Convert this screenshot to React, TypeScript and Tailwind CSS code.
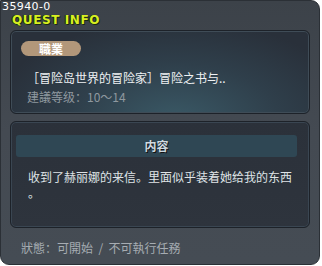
import React from "react";

const cjk = "font-['Noto_Sans_CJK_SC','Noto_Sans',sans-serif]";

const QuestInfo = () => {
  return (
    <div className={`w-[322px] h-[266px] bg-white ${cjk}`}>
      <div className="w-[320px] h-[265px] rounded-tr-[9px] rounded-b-[9px] border border-[#2b3036] bg-gradient-to-b from-[#3c4249] via-[#444a52] to-[#454c54] flex flex-col">
        {/* header */}
        <div className="h-[29px] flex flex-col">
          <div className="pl-[1px] text-[11px] leading-[11px] tracking-[0.4px] text-white font-['DejaVu_Sans',sans-serif]">
            35940-0
          </div>
          <div className="pl-[11px] mt-[2px] text-[12px] leading-[12px] tracking-[0.6px] font-bold text-[#d8f020] font-['DejaVu_Sans',sans-serif] [text-shadow:1px_1px_0_#1b2a10,-1px_0_0_#1b2a10]">
            QUEST INFO
          </div>
        </div>

        <div className="px-[9px] flex flex-col gap-[7px]">
          {/* quest card */}
          <div className="h-[84px] rounded-[6px] border border-[#1d2229] shadow-[inset_0_0_0_1px_#3f4c57] bg-[radial-gradient(ellipse_at_55%_110%,#3a5966_0%,#2f3f4b_45%,#29303a_80%)] px-[10px] pt-[10px]">
            <div className="w-[60px] h-[15px] rounded-full bg-[#b2977a] flex items-center justify-center text-[12px] leading-none font-bold text-white">
              職業
            </div>
            <div className="mt-[14px] pl-[6px] text-[12px] leading-[16px] text-[#eef1f3]">
              ［冒险岛世界的冒险家］冒险之书与..
            </div>
            <div className="mt-[3px] pl-[6px] text-[12px] leading-[16px] text-[#8f989f]">
              建議等级：10～14
            </div>
          </div>

          {/* content card */}
          <div className="h-[107px] rounded-[6px] border border-[#1d2229] shadow-[inset_0_0_0_1px_#3a4652] bg-gradient-to-b from-[#2b313a] to-[#2e343d] pt-[13px] pl-[5px] pr-[12px]">
            <div className="h-[22px] rounded-[3px] bg-[#2f4754] flex items-center justify-center text-[12px] font-bold text-[#cfd9e0] [text-shadow:1px_1px_0_#111]">
              内容
            </div>
            <div className="mt-[12px] pl-[12px] text-[12px] leading-[16px] text-[#dfe3e6]">
              <div>收到了赫丽娜的来信。里面似乎装着她给我的东西</div>
              <div>。</div>
            </div>
          </div>
        </div>

        <div className="mt-[12px] pl-[20px] text-[12px] leading-[16px] text-[#a6acb2] whitespace-pre">
          狀態：可開始  /  不可執行任務
        </div>
      </div>
    </div>
  );
};

export default function App() {
  return <QuestInfo />;
}
